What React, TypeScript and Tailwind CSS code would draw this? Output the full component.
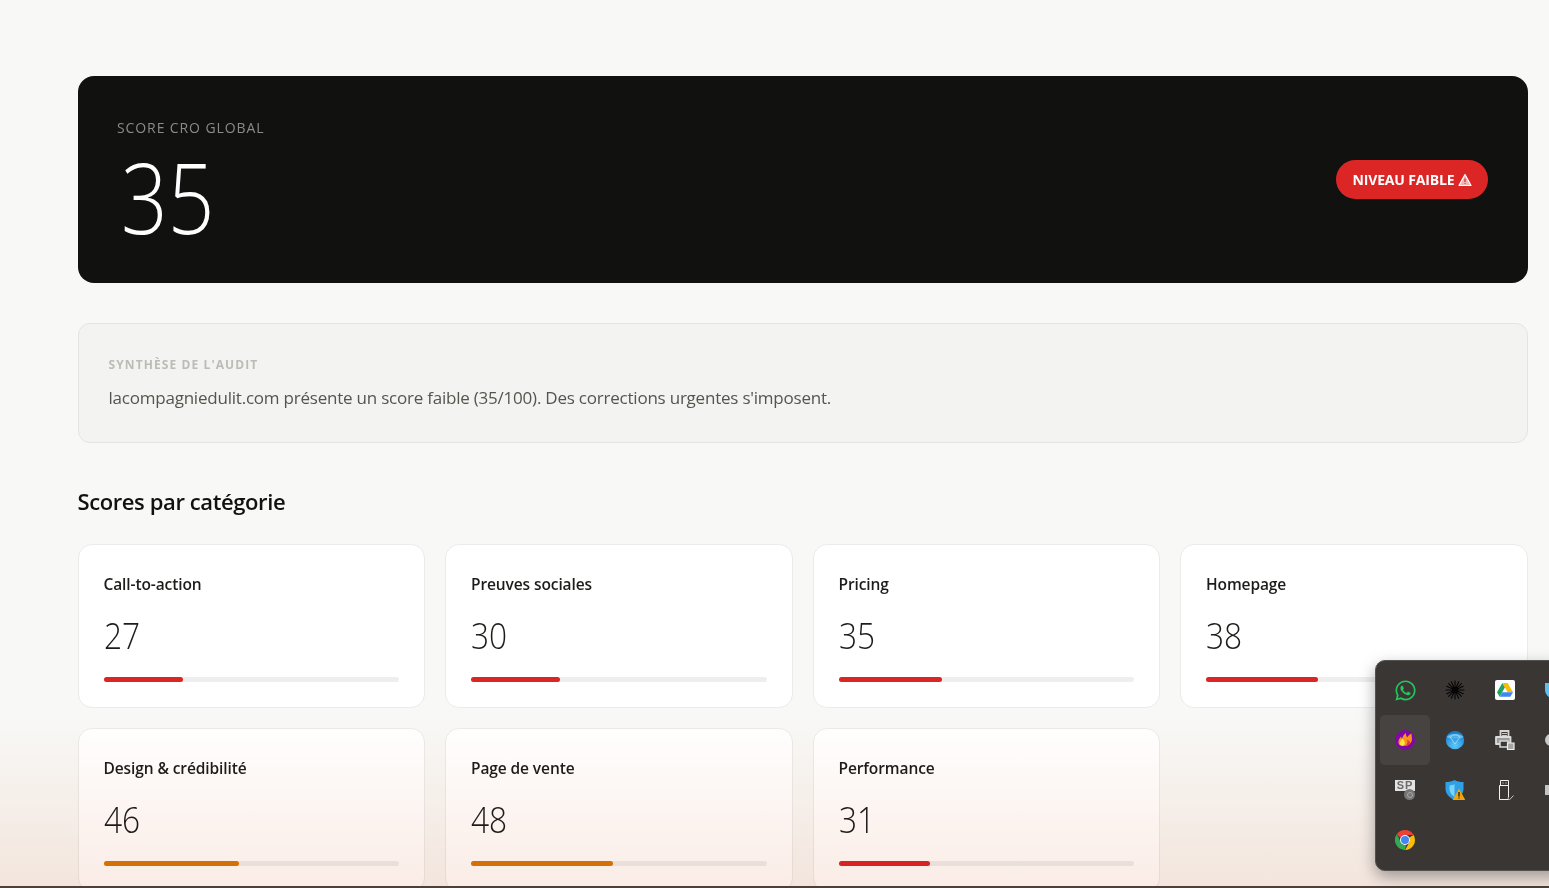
import { FaWhatsapp } from "react-icons/fa";

const scores = [
  { label: "Call-to-action", value: 27, color: "bg-[#dc2626]" },
  { label: "Preuves sociales", value: 30, color: "bg-[#dc2626]" },
  { label: "Pricing", value: 35, color: "bg-[#dc2626]" },
  { label: "Homepage", value: 38, color: "bg-[#dc2626]" },
  { label: "Design & crédibilité", value: 46, color: "bg-[#d97706]" },
  { label: "Page de vente", value: 48, color: "bg-[#d97706]" },
  { label: "Performance", value: 31, color: "bg-[#dc2626]" },
];

function ScoreCard({ label, value, color }: { label: string; value: number; color: string }) {
  return (
    <div className="h-[164px] rounded-[14px] border border-[#ebebe9] bg-white px-[25px] pt-[27px]">
      <div className="text-[15.5px] leading-[24px] font-semibold tracking-[-0.1px] text-[#1c1c1a]">{label}</div>
      <div className="mt-[16px] origin-left scale-x-[0.88] text-[36px] leading-[48px] font-light text-[#1c1c1a]">{value}</div>
      <div className="mt-[17px] h-[5px] rounded-full bg-[#eeeeee]">
        <div className={`h-full rounded-full ${color}`} style={{ width: `${value}%` }} />
      </div>
    </div>
  );
}

function DriveIcon() {
  return (
    <div className="flex h-5 w-5 items-center justify-center rounded-[2px] bg-white">
      <svg viewBox="0 0 20 18" className="h-[16px] w-[18px]">
        <path d="M7 1 1 11.500l3 5L10 6z" fill="#1fa463" />
        <path d="M7 1h6l6 10.500h-6z" fill="#fbbc04" />
        <path d="M4 16.500h12l3-5H7z" fill="#4285f4" />
      </svg>
    </div>
  );
}

function BurstIcon() {
  return (
    <svg viewBox="0 0 20 20" className="h-5 w-5" stroke="#050505" strokeWidth="1.100" strokeLinecap="round">
      <path d="M10 1v18M1 10h18M3.600 3.600l12.800 12.800M16.400 3.600 3.600 16.400M6.300 1.800l7.400 16.400M13.700 1.800 6.300 18.200M1.800 6.300l16.400 7.400M1.800 13.700l16.400-7.400" />
      <circle cx="10" cy="10" r="2.800" fill="#050505" stroke="none" />
    </svg>
  );
}

function FlameIcon() {
  return (
    <svg viewBox="0 0 20 20" className="h-5 w-5">
      <circle cx="10" cy="10" r="10" fill="#8208a6" />
      <path d="M3.500 13C3 10.500 4.500 8.500 6 6.500c.2 1.200.6 2 1.300 2.400C7.300 6.800 8.600 4.600 11 3c-.3 2 .5 3.300 1.300 4.300.7-1 1.600-2.300 4.200-3.800-.1 2.500.9 4.300.3 7-.6 2.800-3 5-6.300 5.300H7c-1.800-.1-3.100-1-3.500-2.800z" fill="#f7941d" />
      <path d="M4.800 14.300C4.200 12.300 6.200 10.300 7.200 8.300c1.200 1.600 2.700 3 2.600 5 0 1-.6 2.100-1.400 2.500H7C6 15.700 5.200 15.200 4.800 14.300z" fill="#ffe53b" />
      <path d="M10.500 15.800c2-1.800 2.200-4 1.700-6.300 1.900 1.200 3.700 2.700 2.700 4.300-.8 1.300-2.600 1.900-4.400 2z" fill="#f0304f" />
    </svg>
  );
}

function GlobeIcon() {
  return (
    <svg viewBox="0 0 20 20" className="h-5 w-5">
      <defs>
        <radialGradient id="globe" cx="0.5" cy="0.8" r="0.8">
          <stop offset="0" stopColor="#62c6f5" />
          <stop offset="0.6" stopColor="#2a9be2" />
          <stop offset="1" stopColor="#0f75c2" />
        </radialGradient>
      </defs>
      <circle cx="10" cy="10" r="9.200" fill="url(#globe)" />
      <path d="M1.500 7c3-4 14-4 17 0-3 2-14 2-17 0z" fill="#a8e2fb" fillOpacity="0.55" />
      <path d="M5.500 7.500 7.500 5h5l2 2.500L10 14z" fill="#2f9fe3" fillOpacity="0.5" stroke="#c8eefd" strokeWidth="0.6" />
    </svg>
  );
}

function PrinterIcon() {
  return (
    <svg viewBox="0 0 20 20" className="h-5 w-5">
      <path d="M5.500 1h8v7h-8z" fill="#3b3735" stroke="#d4d4d4" strokeWidth="1.800" />
      <path d="M1 7h14.500v7H1z" fill="#9a9a9a" stroke="#dcdcdc" strokeWidth="1.800" strokeLinejoin="round" />
      <path d="M5 11h8v6H5z" fill="#3b3735" stroke="#d8d8d8" strokeWidth="1.500" />
      <path d="M7 3.500h5M7 5.500h5" stroke="#c8c8c8" strokeWidth="1" />
      <path d="M12.500 13h6.500v6.500h-6.500z" fill="#a5a5a5" stroke="#efefef" strokeWidth="1.200" />
    </svg>
  );
}

function SpIcon() {
  return (
    <div className="relative h-5 w-5">
      <div className="flex h-[11px] w-5 items-center justify-center bg-[#e3e3e3] font-['Liberation_Sans',sans-serif] text-[11px] leading-none font-bold tracking-[1px] text-[#6b6b6b]">
        SP
      </div>
      <div className="absolute top-[9px] left-[9px] flex h-[11px] w-[11px] items-center justify-center rounded-full bg-[#777777]">
        <div className="h-[6px] w-[6px] rounded-full border border-[#a8a8a8]" />
      </div>
    </div>
  );
}

function ShieldWarnIcon() {
  return (
    <svg viewBox="0 0 20 20" className="h-5 w-5">
      <path d="M9.500 0C7 1.500 4 2 .5 2v7c0 4.500 3.500 8.500 9 11 5.500-2.500 9-6.500 9-11V2C15 2 12 1.500 9.500 0z" fill="#2ea0e8" />
      <path d="M9.500 4C8 5 6.500 5.300 4.500 5.500V9c0 3 2 6 5 8z" fill="#7dd3f7" />
      <path d="M14 8.500 20.300 20H7.700z" fill="#f0a30a" />
      <path d="M14 12v4.500M14 17.500v1" stroke="#1a1a1a" strokeWidth="1.300" />
    </svg>
  );
}

function UsbIcon() {
  return (
    <svg viewBox="0 0 20 20" className="h-5 w-5" fill="none" stroke="#f2f2f2" strokeWidth="1">
      <path d="M5.500.5h8v5h-8zM4.500 5.500h9v14h-9z" />
      <path d="M7.500 3h1M10.500 3h1" strokeWidth="1.200" />
      <path d="m12.500 18 2 1.800 4-4.300" stroke="#c9c9c9" fill="#3a3634" />
    </svg>
  );
}

function ChromeIcon() {
  return (
    <svg viewBox="0 0 20 20" className="h-5 w-5">
      <path d="M10 0a10 10 0 0 1 8.660 5H10a5 5 0 0 0-4.600 3L1.900 4.100A10 10 0 0 1 10 0z" fill="#ea4335" />
      <path d="M18.660 5A10 10 0 0 1 10 20l4.300-7.500A5 5 0 0 0 14.300 7.500z" fill="#fbbc04" />
      <path d="M10 20A10 10 0 0 1 1.900 4.100l4.300 9.200A5 5 0 0 0 11 15z" fill="#34a853" />
      <circle cx="10" cy="10" r="5" fill="#fff" />
      <circle cx="10" cy="10" r="4" fill="#4285f4" />
    </svg>
  );
}

function TrayCell({ active, children }: { active?: boolean; children?: React.ReactNode }) {
  return (
    <div className={`flex h-[50px] w-[50px] items-center justify-center rounded-[5px] ${active ? "bg-[#474341]" : ""}`}>
      {children}
    </div>
  );
}

function TrayPopup() {
  return (
    <div className="absolute top-[660px] left-[1375px] h-[211px] w-[190px] rounded-[10px] border border-[#55514f] bg-[#3a3634] p-[4px] shadow-[0_6px_16px_rgba(0,0,0,0.35)]">
      <div className="grid w-[200px] grid-cols-4">
        <TrayCell>
          <FaWhatsapp className="h-[23px] w-[23px] text-[#25c45c]" />
        </TrayCell>
        <TrayCell>
          <BurstIcon />
        </TrayCell>
        <TrayCell>
          <DriveIcon />
        </TrayCell>
        <TrayCell>
          <div className="h-[15px] w-5 rounded-b-[8px] bg-[#5cc0f2]" />
        </TrayCell>
        <TrayCell active>
          <FlameIcon />
        </TrayCell>
        <TrayCell>
          <GlobeIcon />
        </TrayCell>
        <TrayCell>
          <PrinterIcon />
        </TrayCell>
        <TrayCell>
          <div className="h-[12px] w-5 rounded-full bg-[#c9c9c9]" />
        </TrayCell>
        <TrayCell>
          <SpIcon />
        </TrayCell>
        <TrayCell>
          <ShieldWarnIcon />
        </TrayCell>
        <TrayCell>
          <UsbIcon />
        </TrayCell>
        <TrayCell>
          <div className="h-[10px] w-5 bg-[#c4c4c4]" />
        </TrayCell>
        <TrayCell>
          <ChromeIcon />
        </TrayCell>
      </div>
    </div>
  );
}

export default function App() {
  return (
    <div className="relative h-[888px] overflow-hidden bg-[#f8f8f6] font-['Open_Sans','Noto_Sans',sans-serif]">
      <main className="pt-[76px] pr-[21.5px] pl-[77.5px]">
        <section className="flex h-[207px] items-center justify-between rounded-[16px] bg-[#111110] pr-[40px] pl-[39.5px]">
          <div className="h-full pt-[42px]">
            <div className="text-[14px] leading-[20px] tracking-[0.9px] text-[#8a8a88]">SCORE CRO GLOBAL</div>
            <div className="mt-[13px] ml-[4px] origin-left scale-x-[0.835] text-[98px] leading-[90px] font-light text-white">35</div>
          </div>
          <div className="flex h-[39px] items-center gap-[3px] rounded-full bg-[#dc2626] px-[16px] text-[14px] font-bold tracking-[-0.15px] text-white">
            NIVEAU FAIBLE
            <svg viewBox="0 0 14 14" className="h-[14px] w-[14px]" fill="#f3b4b4" stroke="#fff" strokeWidth="1.200" strokeLinejoin="round">
              <path d="M7 1.500 13 12.500H1z" />
              <path d="M7 5.500v3.500M7 10v.8" fill="none" stroke="#dc2626" />
            </svg>
          </div>
        </section>

        <section className="mt-[40px] h-[120px] rounded-[12px] border border-[#e4e4e1] bg-[#f3f3f1] px-[30px] pt-[32px]">
          <div className="text-[12px] leading-[18px] font-bold tracking-[1.1px] text-[#bcbcb6]">SYNTHÈSE DE L'AUDIT</div>
          <p className="mt-[10px] text-[17px] leading-[28px] tracking-[-0.22px] text-[#55554f]">
            lacompagniedulit.com présente un score faible (35/100). Des corrections urgentes s'imposent.
          </p>
        </section>

        <h2 className="mt-[39px] text-[22px] leading-[38px] font-semibold tracking-[-0.4px] text-[#111110]">Scores par catégorie</h2>

        <div className="mt-[24px] grid grid-cols-4 gap-[20px]">
          {scores.map((s) => (
            <ScoreCard key={s.label} {...s} />
          ))}
        </div>
      </main>

      {/* tint of the OS window behind the page */}
      <div className="pointer-events-none absolute right-0 bottom-0 left-0 h-[170px] bg-gradient-to-b from-white to-[#faece6] mix-blend-multiply" />
      <div className="absolute right-0 bottom-0 left-0 h-[2px] bg-[#4d403b]" />

      <TrayPopup />
    </div>
  );
}
